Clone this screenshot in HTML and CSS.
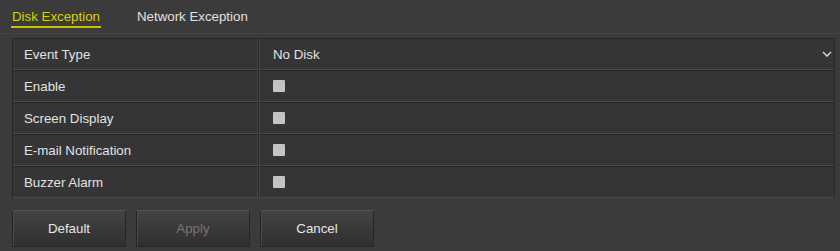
FILE: index.html
```html
<!DOCTYPE html>
<html>
<head>
<meta charset="utf-8">
<link rel="stylesheet" href="styles.css">
</head>
<body>
<div class="page">
  <div class="tabs">
    <div class="tab active">Disk Exception</div>
    <div class="tab">Network Exception</div>
  </div>
  <div class="table">
    <div class="row">
      <div class="cell label">Event Type</div>
      <div class="cell value select">
        <span>No Disk</span>
        <svg class="chev" width="10" height="6" viewBox="0 0 10 6"><path d="M1 1 L5 5 L9 1" fill="none" stroke="#d0d0d0" stroke-width="1.6"/></svg>
      </div>
    </div>
    <div class="row">
      <div class="cell label">Enable</div>
      <div class="cell value"><span class="check"></span></div>
    </div>
    <div class="row">
      <div class="cell label">Screen Display</div>
      <div class="cell value"><span class="check"></span></div>
    </div>
    <div class="row">
      <div class="cell label">E-mail Notification</div>
      <div class="cell value"><span class="check"></span></div>
    </div>
    <div class="row">
      <div class="cell label">Buzzer Alarm</div>
      <div class="cell value"><span class="check"></span></div>
    </div>
  </div>
  <div class="buttons">
    <div class="btn">Default</div>
    <div class="btn disabled">Apply</div>
    <div class="btn">Cancel</div>
  </div>
</div>
</body>
</html>
```
FILE: styles.css
```css
html, body {
  margin: 0;
  padding: 0;
  background: #3b3b3b;
  width: 840px;
  height: 251px;
  overflow: hidden;
}
.page {
  font-family: "Liberation Sans", Arial, sans-serif;
  font-size: 13.3px;
  color: #e2e2e2;
}
.tabs {
  display: flex;
  gap: 36px;
  height: 34px;
  padding-left: 11px;
  border-bottom: 1px solid #444444;
  box-sizing: border-box;
}
.tab {
  padding-top: 9px;
  height: 21px;
  line-height: 15px;
  color: #e0e0e0;
}
.tab.active {
  color: #d8d400;
  border-bottom: 2px solid #c8c400;
  height: 17px;
  padding-left: 1px;
  padding-right: 1px;
}
.table {
  margin: 4px 5px 0 12px;
  border-left: 1px solid #282828;
  border-right: 1px solid #282828;
}
.row {
  display: flex;
  height: 32px;
}
.cell {
  box-sizing: border-box;
  height: 32px;
  background: #353535;
  border-top: 1px solid #262626;
  border-bottom: 1px solid #4a4a4a;
  display: flex;
  align-items: center;
}
.label {
  width: 246px;
  padding-left: 11px;
  border-right: 1px solid #262626;
  box-shadow: inset -1px 0 0 #474747;
}
.value {
  flex: 1;
  padding-left: 13px;
  border-left: 1px solid #474747;
}
.select {
  justify-content: space-between;
  padding-right: 2px;
}
.chev {
  display: block;
}
.check {
  width: 12px;
  height: 12px;
  background: #c4c4c4;
  border-radius: 1px;
  display: block;
}
.buttons {
  display: flex;
  gap: 10px;
  margin: 12px 0 0 12px;
}
.btn {
  width: 114px;
  height: 37px;
  box-sizing: border-box;
  border: 1px solid #262626;
  border-top-color: #555555;
  background: linear-gradient(#444444, #383838 55%, #2f2f2f);
  display: flex;
  align-items: center;
  justify-content: center;
  color: #e6e6e6;
  box-shadow: inset 1px 0 0 #4a4a4a;
}
.btn.disabled {
  color: #767676;
}
```
